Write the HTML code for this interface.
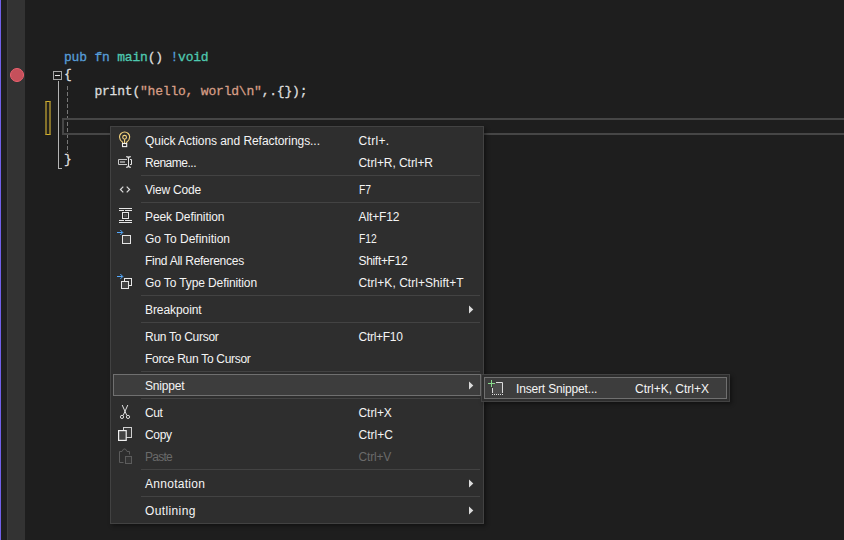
<!DOCTYPE html>
<html><head><meta charset="utf-8"><title>editor</title>
<style>
html,body{margin:0;padding:0;background:#1e1e1e;}
body{width:844px;height:540px;position:relative;overflow:hidden;font-family:"Liberation Sans",sans-serif;}
.abs{position:absolute;}
.t{position:absolute;white-space:pre;font-size:12px;line-height:22px;height:22px;color:#f4f4f4;font-family:"Liberation Sans",sans-serif;}
.t.dis{color:#6a6a6a;}
.code{position:absolute;left:64px;white-space:pre;font-family:"Liberation Mono",monospace;font-size:13px;letter-spacing:-0.2px;line-height:17px;height:17px;color:#dcdcdc;-webkit-text-stroke:0.3px currentColor;}
.kw{color:#569cd6}.ty{color:#4ec9b0}.st{color:#d69d85}
.sep{position:absolute;left:141px;width:339px;height:1px;background:#434343;}
svg{position:absolute;overflow:visible;}
</style></head><body>
<!-- left chrome -->
<div class="abs" style="left:0;top:0;width:1px;height:540px;background:#7160e8"></div>
<div class="abs" style="left:1px;top:0;width:6px;height:540px;background:#1f1f1f"></div>
<div class="abs" style="left:7px;top:0;width:18px;height:540px;background:#333333"></div>
<div class="abs" style="left:7px;top:0;width:1px;height:540px;background:#3d3d3d"></div>
<!-- breakpoint -->
<div class="abs" style="left:10px;top:68px;width:12px;height:12px;border-radius:50%;background:#c5505b;border:1px solid #ee6270"></div>
<!-- code -->
<div class="code" style="top:49px"><span class="kw">pub</span> <span class="kw">fn</span> <span class="ty">main</span>() <span class="kw">!</span><span class="ty">void</span></div>
<div class="code" style="top:66px">{</div>
<div class="code" style="top:83px">    print(<span class="st">"hello, world\n"</span>,.{});</div>
<div class="code" style="top:151px">}</div>
<!-- fold box + lines -->
<div class="abs" style="left:53px;top:71px;width:7px;height:7px;border:1px solid #a5a5a5;background:#1e1e1e"></div>
<div class="abs" style="left:55px;top:75px;width:5px;height:1px;background:#e6e6e6"></div>
<div class="abs" style="left:58px;top:81px;width:1px;height:88px;background:#b4b4b4"></div>
<div class="abs" style="left:58px;top:168px;width:4px;height:1px;background:#b4b4b4"></div>
<!-- indent guide dashed -->
<div class="abs" style="left:67px;top:86px;width:1px;height:67px;background:repeating-linear-gradient(to bottom,#777 0,#777 4px,transparent 4px,transparent 6px)"></div>
<!-- change bar -->
<div class="abs" style="left:45px;top:101px;width:2px;height:32px;background:#23211b;border-left:2px solid #85722a;border-right:2px solid #85722a;border-top:1px solid #d9b62e;border-bottom:1px solid #d9b62e"></div>
<!-- current line box -->
<div class="abs" style="left:62px;top:118px;width:800px;height:13px;border:2px solid #464646"></div>

<div class="abs" style="left:110px;top:126px;width:372px;height:396px;background:#2e2e2e;border:1px solid #424242;box-shadow:2px 2px 4px rgba(0,0,0,0.4)"></div>
<div class="sep" style="top:175px"></div>
<div class="sep" style="top:202px"></div>
<div class="sep" style="top:295px"></div>
<div class="sep" style="top:322px"></div>
<div class="sep" style="top:371px"></div>
<div class="sep" style="top:398px"></div>
<div class="sep" style="top:469px"></div>
<div class="sep" style="top:496px"></div>
<div class="abs" style="left:113px;top:374px;width:366px;height:20px;background:#3d3d3d;border:1px solid #707070"></div>
<span class="t " style="left:145px;top:130px;letter-spacing:-0.056px" >Quick Actions and Refactorings...</span>
<span class="t " style="left:358.5px;top:130px;letter-spacing:0.320px" >Ctrl+.</span>
<span class="t " style="left:145px;top:152px;letter-spacing:-0.475px" >Rename...</span>
<span class="t " style="left:358.5px;top:152px;letter-spacing:-0.062px" >Ctrl+R, Ctrl+R</span>
<span class="t " style="left:145px;top:179px;letter-spacing:-0.213px" >View Code</span>
<span class="t " style="left:358.5px;top:179px;letter-spacing:0.000px;transform:scaleX(0.86);transform-origin:0 0" >F7</span>
<span class="t " style="left:145px;top:206px;letter-spacing:-0.086px" >Peek Definition</span>
<span class="t " style="left:358.5px;top:206px;letter-spacing:-0.117px" >Alt+F12</span>
<span class="t " style="left:145px;top:228px;letter-spacing:-0.013px" >Go To Definition</span>
<span class="t " style="left:358.5px;top:228px;letter-spacing:0.000px;transform:scaleX(0.86);transform-origin:0 0" >F12</span>
<span class="t " style="left:145px;top:250px;letter-spacing:-0.272px" >Find All References</span>
<span class="t " style="left:358.5px;top:250px;letter-spacing:-0.325px" >Shift+F12</span>
<span class="t " style="left:145px;top:272px;letter-spacing:-0.110px" >Go To Type Definition</span>
<span class="t " style="left:358.5px;top:272px;letter-spacing:0.037px" >Ctrl+K, Ctrl+Shift+T</span>
<span class="t " style="left:145px;top:299px;letter-spacing:-0.078px" >Breakpoint</span>
<svg style="left:469px;top:305px" width="5" height="9" viewBox="0 0 5 9"><path d="M0 0.5 L4.3 4.5 L0 8.5 Z" fill="#dcdcdc"/></svg>
<span class="t " style="left:145px;top:326px;letter-spacing:-0.275px" >Run To Cursor</span>
<span class="t " style="left:358.5px;top:326px;letter-spacing:-0.286px" >Ctrl+F10</span>
<span class="t " style="left:145px;top:348px;letter-spacing:-0.294px" >Force Run To Cursor</span>
<span class="t " style="left:145px;top:375px;letter-spacing:-0.170px" >Snippet</span>
<svg style="left:469px;top:381px" width="5" height="9" viewBox="0 0 5 9"><path d="M0 0.5 L4.3 4.5 L0 8.5 Z" fill="#dcdcdc"/></svg>
<span class="t " style="left:145px;top:402px;letter-spacing:-0.450px" >Cut</span>
<span class="t " style="left:358.5px;top:402px;letter-spacing:-0.060px" >Ctrl+X</span>
<span class="t " style="left:145px;top:424px;letter-spacing:-0.300px" >Copy</span>
<span class="t " style="left:358.5px;top:424px;letter-spacing:0.000px" >Ctrl+C</span>
<span class="t dis" style="left:145px;top:446px;letter-spacing:-0.725px" >Paste</span>
<span class="t dis" style="left:358.5px;top:446px;letter-spacing:-0.160px" >Ctrl+V</span>
<span class="t " style="left:145px;top:473px;letter-spacing:0.278px" >Annotation</span>
<svg style="left:469px;top:479px" width="5" height="9" viewBox="0 0 5 9"><path d="M0 0.5 L4.3 4.5 L0 8.5 Z" fill="#dcdcdc"/></svg>
<span class="t " style="left:145px;top:500px;letter-spacing:0.375px" >Outlining</span>
<svg style="left:469px;top:506px" width="5" height="9" viewBox="0 0 5 9"><path d="M0 0.5 L4.3 4.5 L0 8.5 Z" fill="#dcdcdc"/></svg>
<div class="abs" style="left:481px;top:374px;width:247px;height:26px;background:#2e2e2e;border:1px solid #424242;box-shadow:2px 2px 4px rgba(0,0,0,0.4)"></div>
<div class="abs" style="left:484px;top:377px;width:241px;height:20px;background:#3d3d3d;border:1px solid #707070"></div>
<span class="t " style="left:516px;top:378px;letter-spacing:-0.163px" >Insert Snippet...</span>
<span class="t " style="left:635px;top:378px;letter-spacing:0.000px" >Ctrl+K, Ctrl+X</span>
<svg style="left:0;top:0" width="844" height="540" viewBox="0 0 844 540" fill="none">
<!-- lightbulb -->
<g stroke="#f3d27c" stroke-width="1.1" fill="none">
<path d="M122.6 143.2 L122.6 142.3 C120.4 140.7 119.5 139.2 119.5 137.1 A5.1 5.1 0 0 1 129.7 137.1 C129.7 139.2 128.8 140.7 126.6 142.3 L126.6 143.2"/>
<circle cx="124.6" cy="137.3" r="1.9"/>
<path d="M124.6 139.3 L124.6 143"/>
</g>
<rect x="122.5" y="143.5" width="4.2" height="3.1" stroke="#f0f0f0" stroke-width="1.1" fill="#2e2e2e"/>
<!-- rename -->
<path d="M127 159.5 L118.5 159.5 L118.5 164.5 L127 164.5" stroke="#c8c8c8" stroke-width="1" fill="none"/>
<rect x="120" y="161" width="5" height="2" fill="#8c8c8c"/>
<g stroke="#e4e4e4" stroke-width="1" fill="none">
<path d="M126.2 156.6 C127.6 156.6 128.5 157.2 128.5 158.4 C128.5 157.2 129.4 156.6 130.8 156.6" stroke-width="1.2"/>
<path d="M126.2 167.4 C127.6 167.4 128.5 166.8 128.5 165.6 C128.5 166.8 129.4 167.4 130.8 167.4" stroke-width="1.2"/>
<path d="M128.5 157 L128.5 167"/>
<path d="M130 159.5 L131.5 159.5 L131.5 164.5 L130 164.5"/>
</g>
<!-- view code <> -->
<g stroke="#dcdcdc" stroke-width="1.2" fill="none">
<path d="M123.3 186.6 L120.4 189.5 L123.3 192.4"/>
<path d="M126.7 186.6 L129.6 189.5 L126.7 192.4"/>
</g>
<!-- peek definition -->
<g fill="#e6e6e6">
<rect x="119" y="208" width="13" height="1"/>
<rect x="119" y="210" width="5" height="1"/><rect x="125" y="210" width="7" height="1"/>
<rect x="119" y="220" width="5" height="1"/><rect x="125" y="220" width="7" height="1"/>
<rect x="119" y="222" width="13" height="1"/>
</g>
<rect x="122.5" y="212.5" width="6" height="6" stroke="#e6e6e6" fill="#2e2e2e"/>
<rect x="124" y="214" width="3" height="3" fill="#4a4a4a"/>
<!-- go to definition -->
<g stroke="#55aaff" stroke-width="1" fill="none">
<path d="M117 232.5 L122.5 232.5"/><path d="M120.3 230 L122.8 232.5 L120.3 235"/>
</g>
<rect x="122.5" y="235.5" width="8" height="8" stroke="#e6e6e6" fill="#424242"/>
<!-- go to type definition -->
<g stroke="#55aaff" stroke-width="1" fill="none">
<path d="M117 276.5 L122.5 276.5"/><path d="M120.3 274 L122.8 276.5 L120.3 279"/>
</g>
<rect x="124.5" y="278.5" width="7" height="7" stroke="#e6e6e6" fill="#303030"/>
<rect x="121.5" y="281.5" width="7" height="7" stroke="#e6e6e6" fill="#424242"/>
<!-- cut -->
<g stroke="#e0e0e0" stroke-width="1" fill="none">
<path d="M122.2 405 L126.8 415.4"/><path d="M127.8 405 L123.2 415.4"/>
<circle cx="122" cy="416.9" r="1.6"/><circle cx="128" cy="416.9" r="1.6"/>
</g>
<!-- copy -->
<rect x="123.5" y="427.5" width="8" height="10" stroke="#d0d0d0" fill="#3a3a3a"/>
<rect x="118.6" y="430.6" width="7.6" height="9.8" stroke="#f0f0f0" stroke-width="1.2" fill="#424242"/>
<!-- paste (disabled) -->
<g stroke="#5c5c5c" stroke-width="1" fill="none">
<path d="M123.5 462.5 L119.5 462.5 L119.5 451.5 L122 451.5 L123.6 449 L125.4 449 L127 451.5 L129.5 451.5 L129.5 454.5"/>
<rect x="125.5" y="456.5" width="6" height="7" fill="#343434"/>
</g>
<!-- insert snippet -->
<rect x="493" y="383" width="9" height="11" fill="#4b4b4b"/>
<g stroke="#dcdcdc" stroke-width="1" fill="none">
<path d="M496 382.5 L502.5 382.5 L502.5 393"/>
<path d="M492.5 388 L492.5 393"/>
<path d="M492 394.5 L503 394.5" stroke-dasharray="1 1"/>
</g>
<g stroke="#89d98b" stroke-width="1" fill="none">
<path d="M488 383.5 L495 383.5"/><path d="M491.5 380 L491.5 387"/>
</g>
</svg>

</body></html>
